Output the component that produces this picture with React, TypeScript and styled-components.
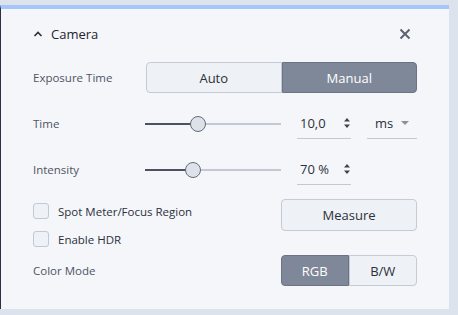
import React from 'react';
import styled, { createGlobalStyle } from 'styled-components';

const GlobalStyle = createGlobalStyle`
  html, body {
    margin: 0;
    padding: 0;
    background: #dde3ec;
    font-family: 'Open Sans', 'Noto Sans', sans-serif;
  }
  * { box-sizing: border-box; }
`;

const Page = styled.div`
  width: 458px;
  height: 315px;
  padding-top: 5px;
  overflow: hidden;
`;

const Panel = styled.section`
  width: 449px;
  height: 304px;
  background: #f4f6fa;
  border-top: 4px solid #a6c6f7;
  border-left: 1px solid #2b3140;
  padding: 0 32px 0 32px;
  display: flex;
  flex-direction: column;
`;

const Header = styled.div`
  height: 49px;
  display: flex;
  align-items: center;
  gap: 8px;
  margin-bottom: 4px;
`;

const Title = styled.span`
  font-size: 13px;
  color: #1f2430;
  flex: 1;
`;

const IconButton = styled.button<{ $w?: number }>`
  border: none;
  background: none;
  padding: 0;
  display: flex;
  align-items: center;
  justify-content: center;
  width: ${(p) => p.$w ?? 16}px;
  height: 16px;
  margin-right: ${(p) => (p.$w ? 0 : 4)}px;
`;

const Row = styled.div<{ $mt?: number }>`
  display: flex;
  align-items: center;
  height: 31px;
  margin-top: ${(p) => p.$mt ?? 0}px;
`;

const Label = styled.span`
  width: 112px;
  font-size: 11.5px;
  color: #4e5464;
`;

const Segmented = styled.div<{ $width: number }>`
  display: flex;
  width: ${(p) => p.$width}px;
  height: 31px;
  margin-left: auto;
`;

const Segment = styled.button<{ $active?: boolean; $grow: number }>`
  flex: ${(p) => p.$grow};
  font-family: inherit;
  font-size: 13px;
  border: 1px solid ${(p) => (p.$active ? '#6b7384' : '#c4cbd6')};
  background: ${(p) => (p.$active ? '#7f8899' : '#eef1f5')};
  color: ${(p) => (p.$active ? '#ffffff' : '#2c303a')};
  padding: 0;
  &:first-child {
    border-radius: 4px 0 0 4px;
  }
  &:last-child {
    border-radius: 0 4px 4px 0;
  }
`;

const SliderBox = styled.div`
  position: relative;
  width: 136px;
  height: 16px;
  display: flex;
  align-items: center;
`;

const Track = styled.div`
  width: 100%;
  height: 2px;
  background: #c2c9d4;
`;

const TrackFill = styled.div`
  position: absolute;
  left: 0;
  top: 7px;
  height: 2px;
  background: #4b5361;
`;

const Thumb = styled.div`
  position: absolute;
  top: 0;
  width: 16px;
  height: 16px;
  margin-left: -8px;
  border-radius: 50%;
  background: #dde2ea;
  border: 1px solid #646c7a;
`;

const Field = styled.div<{ $width: number; $ml: number }>`
  width: ${(p) => p.$width}px;
  margin-left: ${(p) => p.$ml}px;
  height: 31px;
  border-bottom: 1px solid #c2c9d6;
  display: flex;
  align-items: center;
  padding: 0 0 0 3px;
  font-size: 13px;
  color: #2c303a;
`;

const FieldText = styled.span<{ $pl?: number }>`
  flex: 1;
  padding-left: ${(p) => p.$pl ?? 0}px;
`;

const SideRow = styled.div`
  display: flex;
  margin-top: 14px;
  height: 56px;
`;

const Checks = styled.div`
  flex: 1;
  display: flex;
  flex-direction: column;
  gap: 12px;
  padding-top: 4px;
`;

const CheckLabel = styled.label`
  display: flex;
  align-items: center;
  gap: 9px;
  font-size: 11.5px;
  color: #2c303a;
`;

const Box = styled.span`
  width: 16px;
  height: 16px;
  border: 1px solid #c2c9d6;
  border-radius: 3px;
  background: #eef1f5;
`;

const Button = styled.button`
  width: 136px;
  height: 32px;
  border: 1px solid #c4cbd6;
  border-radius: 4px;
  background: #eef1f5;
  font-family: inherit;
  font-size: 13px;
  color: #2c303a;
  padding: 0;
`;

const Slider = ({ value }: { value: number }) => (
  <SliderBox>
    <Track />
    <TrackFill style={{ width: `${value * 100}%` }} />
    <Thumb style={{ left: `${value * 100}%` }} />
  </SliderBox>
);

const Spinner = () => (
  <svg width="8" height="12" viewBox="0 0 8 12">
    <path d="M4 1 L7 4.5 H1 Z" fill="#3c424e" />
    <path d="M4 11 L7 7.5 H1 Z" fill="#3c424e" />
  </svg>
);

const App = () => (
  <>
    <GlobalStyle />
    <Page>
      <Panel>
        <Header>
          <IconButton $w={10}>
            <svg width="10" height="8" viewBox="0 0 10 8">
              <path d="M1.5 6 L5 2.5 L8.5 6" stroke="#2c303a" strokeWidth="1.6" fill="none" />
            </svg>
          </IconButton>
          <Title>Camera</Title>
          <IconButton>
            <svg width="12" height="12" viewBox="0 0 12 12">
              <path d="M1.5 1.5 L10.5 10.5 M10.5 1.5 L1.5 10.5" stroke="#5c6270" strokeWidth="2" />
            </svg>
          </IconButton>
        </Header>

        <Row>
          <Label>Exposure Time</Label>
          <Segmented $width={271}>
            <Segment $grow={1}>Auto</Segment>
            <Segment $grow={1} $active>Manual</Segment>
          </Segmented>
        </Row>

        <Row $mt={15}>
          <Label>Time</Label>
          <Slider value={0.39} />
          <Field $width={54} $ml={16}>
            <FieldText>10,0</FieldText>
            <Spinner />
          </Field>
          <Field $width={50} $ml={16}>
            <FieldText $pl={5}>ms</FieldText>
            <svg width="10" height="6" viewBox="0 0 10 6" style={{ marginRight: 7 }}>
              <path d="M1 1 H9 L5 5 Z" fill="#8a909c" />
            </svg>
          </Field>
        </Row>

        <Row $mt={15}>
          <Label>Intensity</Label>
          <Slider value={0.35} />
          <Field $width={54} $ml={16}>
            <FieldText>70 %</FieldText>
            <Spinner />
          </Field>
        </Row>

        <SideRow>
          <Checks>
            <CheckLabel>
              <Box />
              Spot Meter/Focus Region
            </CheckLabel>
            <CheckLabel>
              <Box />
              Enable HDR
            </CheckLabel>
          </Checks>
          <Button>Measure</Button>
        </SideRow>

        <Row>
          <Label>Color Mode</Label>
          <Segmented $width={136}>
            <Segment $grow={67} $active>RGB</Segment>
            <Segment $grow={68}>B/W</Segment>
          </Segmented>
        </Row>
      </Panel>
    </Page>
  </>
);

export default App;
